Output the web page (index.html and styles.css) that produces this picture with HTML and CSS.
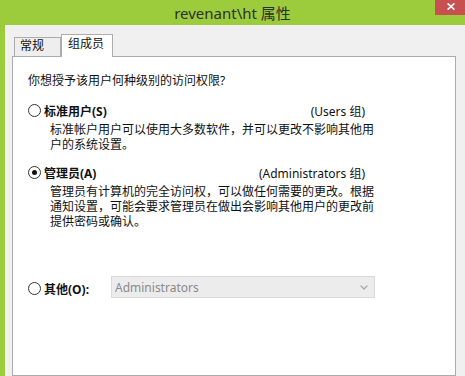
FILE: index.html
```html
<!DOCTYPE html>
<html lang="zh-CN">
<head>
<meta charset="utf-8">
<title>revenant\ht 属性</title>
<link rel="stylesheet" href="styles.css">
</head>
<body>
<div class="window">
  <div class="titlebar">
    <span class="title">revenant\ht 属性</span>
    <span class="close"><svg width="8" height="7" viewBox="0 0 8 7"><path d="M0.6 0.4 L7.4 6.6 M7.4 0.4 L0.6 6.6" stroke="#fff" stroke-width="1.6" fill="none"/></svg></span>
  </div>
  <div class="body">
    <div class="tabs">
      <div class="tab">常规</div>
      <div class="tab active">组成员</div>
    </div>
    <div class="panel">
      <p class="question">你想授予该用户何种级别的访问权限?</p>
      <div class="option opt-std">
        <div class="option-head">
          <span class="radio"></span>
          <span class="label">标准用户(S)</span>
          <span class="group">(Users 组)</span>
        </div>
        <p class="desc">标准帐户用户可以使用大多数软件，并可以更改不影响其他用<br>户的系统设置。</p>
      </div>
      <div class="option opt-admin">
        <div class="option-head">
          <span class="radio checked"></span>
          <span class="label">管理员(A)</span>
          <span class="group">(Administrators 组)</span>
        </div>
        <p class="desc">管理员有计算机的完全访问权，可以做任何需要的更改。根据<br>通知设置，可能会要求管理员在做出会影响其他用户的更改前<br>提供密码或确认。</p>
      </div>
      <div class="option opt-other">
        <div class="other-row">
          <span class="radio"></span>
          <span class="label other-label">其他(O):</span>
          <div class="combo">
            <span class="combo-text">Administrators</span>
            <svg class="chevron" width="8" height="5" viewBox="0 0 8 5"><path d="M0.6 0.6 L4 4 L7.4 0.6" stroke="#a8a8a8" stroke-width="1.3" fill="none"/></svg>
          </div>
        </div>
      </div>
    </div>
  </div>
</div>
</body>
</html>
```
FILE: styles.css
```css
* { box-sizing: border-box; }
html, body { margin: 0; padding: 0; }
body {
  font-family: "Noto Sans", "Noto Sans CJK SC", sans-serif;
  font-size: 12px;
  color: #111;
  background: #f0f0f0;
}
.window {
  width: 465px;
  height: 376px;
  background: #9ccb3b;
  display: flex;
  flex-direction: column;
  overflow: hidden;
}
.titlebar {
  height: 25px;
  flex: none;
  position: relative;
  display: flex;
  align-items: center;
  justify-content: center;
  font-size: 15px;
  color: #2f2f2f;
}
.title { line-height: 20px; }
.close {
  position: absolute;
  right: 0;
  top: 0;
  width: 30px;
  height: 15px;
  background: #c75050;
  display: flex;
  justify-content: center;
  align-items: flex-start;
  padding-top: 3px;
  padding-left: 2px;
}
.close svg { display: block; }
.body {
  flex: 1;
  margin-left: 5px;
  background: #f0f0f0;
  padding: 9px 9px 0 7px;
  display: flex;
  flex-direction: column;
}
.tabs {
  display: flex;
  align-items: flex-end;
  height: 22px;
  flex: none;
  padding-left: 2px;
  position: relative;
  z-index: 1;
}
.tab {
  border: 1px solid #acacac;
  border-bottom: 0;
  background: #eeeeee;
  height: 19px;
  width: 47px;
  line-height: 16px;
  padding-left: 5px;
  white-space: nowrap;
}
.tab.active {
  background: #fff;
  height: 23px;
  width: 52px;
  margin-bottom: -1px;
  line-height: 18px;
  padding-left: 6px;
}
.panel {
  flex: 1;
  background: #fff;
  border: 1px solid #acacac;
  padding: 16px 0 0 15px;
}
.question {
  margin: 0;
  line-height: 15px;
}
.option-head {
  display: flex;
  align-items: center;
  height: 15px;
  width: 337px;
}
.opt-std { margin-top: 15px; }
.opt-admin { margin-top: 12px; }
.opt-other { margin-top: 46px; }
.radio {
  width: 13px;
  height: 13px;
  border: 1px solid #333;
  border-radius: 50%;
  background: #fff;
  margin-right: 3px;
  flex: none;
  display: flex;
  align-items: center;
  justify-content: center;
}
.radio.checked::after {
  content: "";
  width: 5px;
  height: 5px;
  border-radius: 50%;
  background: #111;
}
.label {
  font-weight: bold;
  white-space: nowrap;
}
.group {
  margin-left: auto;
  white-space: nowrap;
}
.desc {
  margin: 5px 0 0 0;
  padding-left: 22px;
  font-family: "Liberation Sans", "Noto Sans CJK SC", sans-serif;
  line-height: 15px;
  white-space: nowrap;
}
.other-row {
  display: flex;
  align-items: center;
  height: 22px;
}
.other-label {
  width: 67px;
  flex: none;
  padding-top: 3px;
}
.other-row .radio { margin-top: 3px; }
.combo {
  width: 264px;
  height: 22px;
  border: 1px solid #d9d9d9;
  background: #ececec;
  display: flex;
  align-items: center;
  justify-content: space-between;
  padding: 0 6px 0 3px;
}
.combo-text { color: #8a8a8a; }
.chevron { display: block; }
```
